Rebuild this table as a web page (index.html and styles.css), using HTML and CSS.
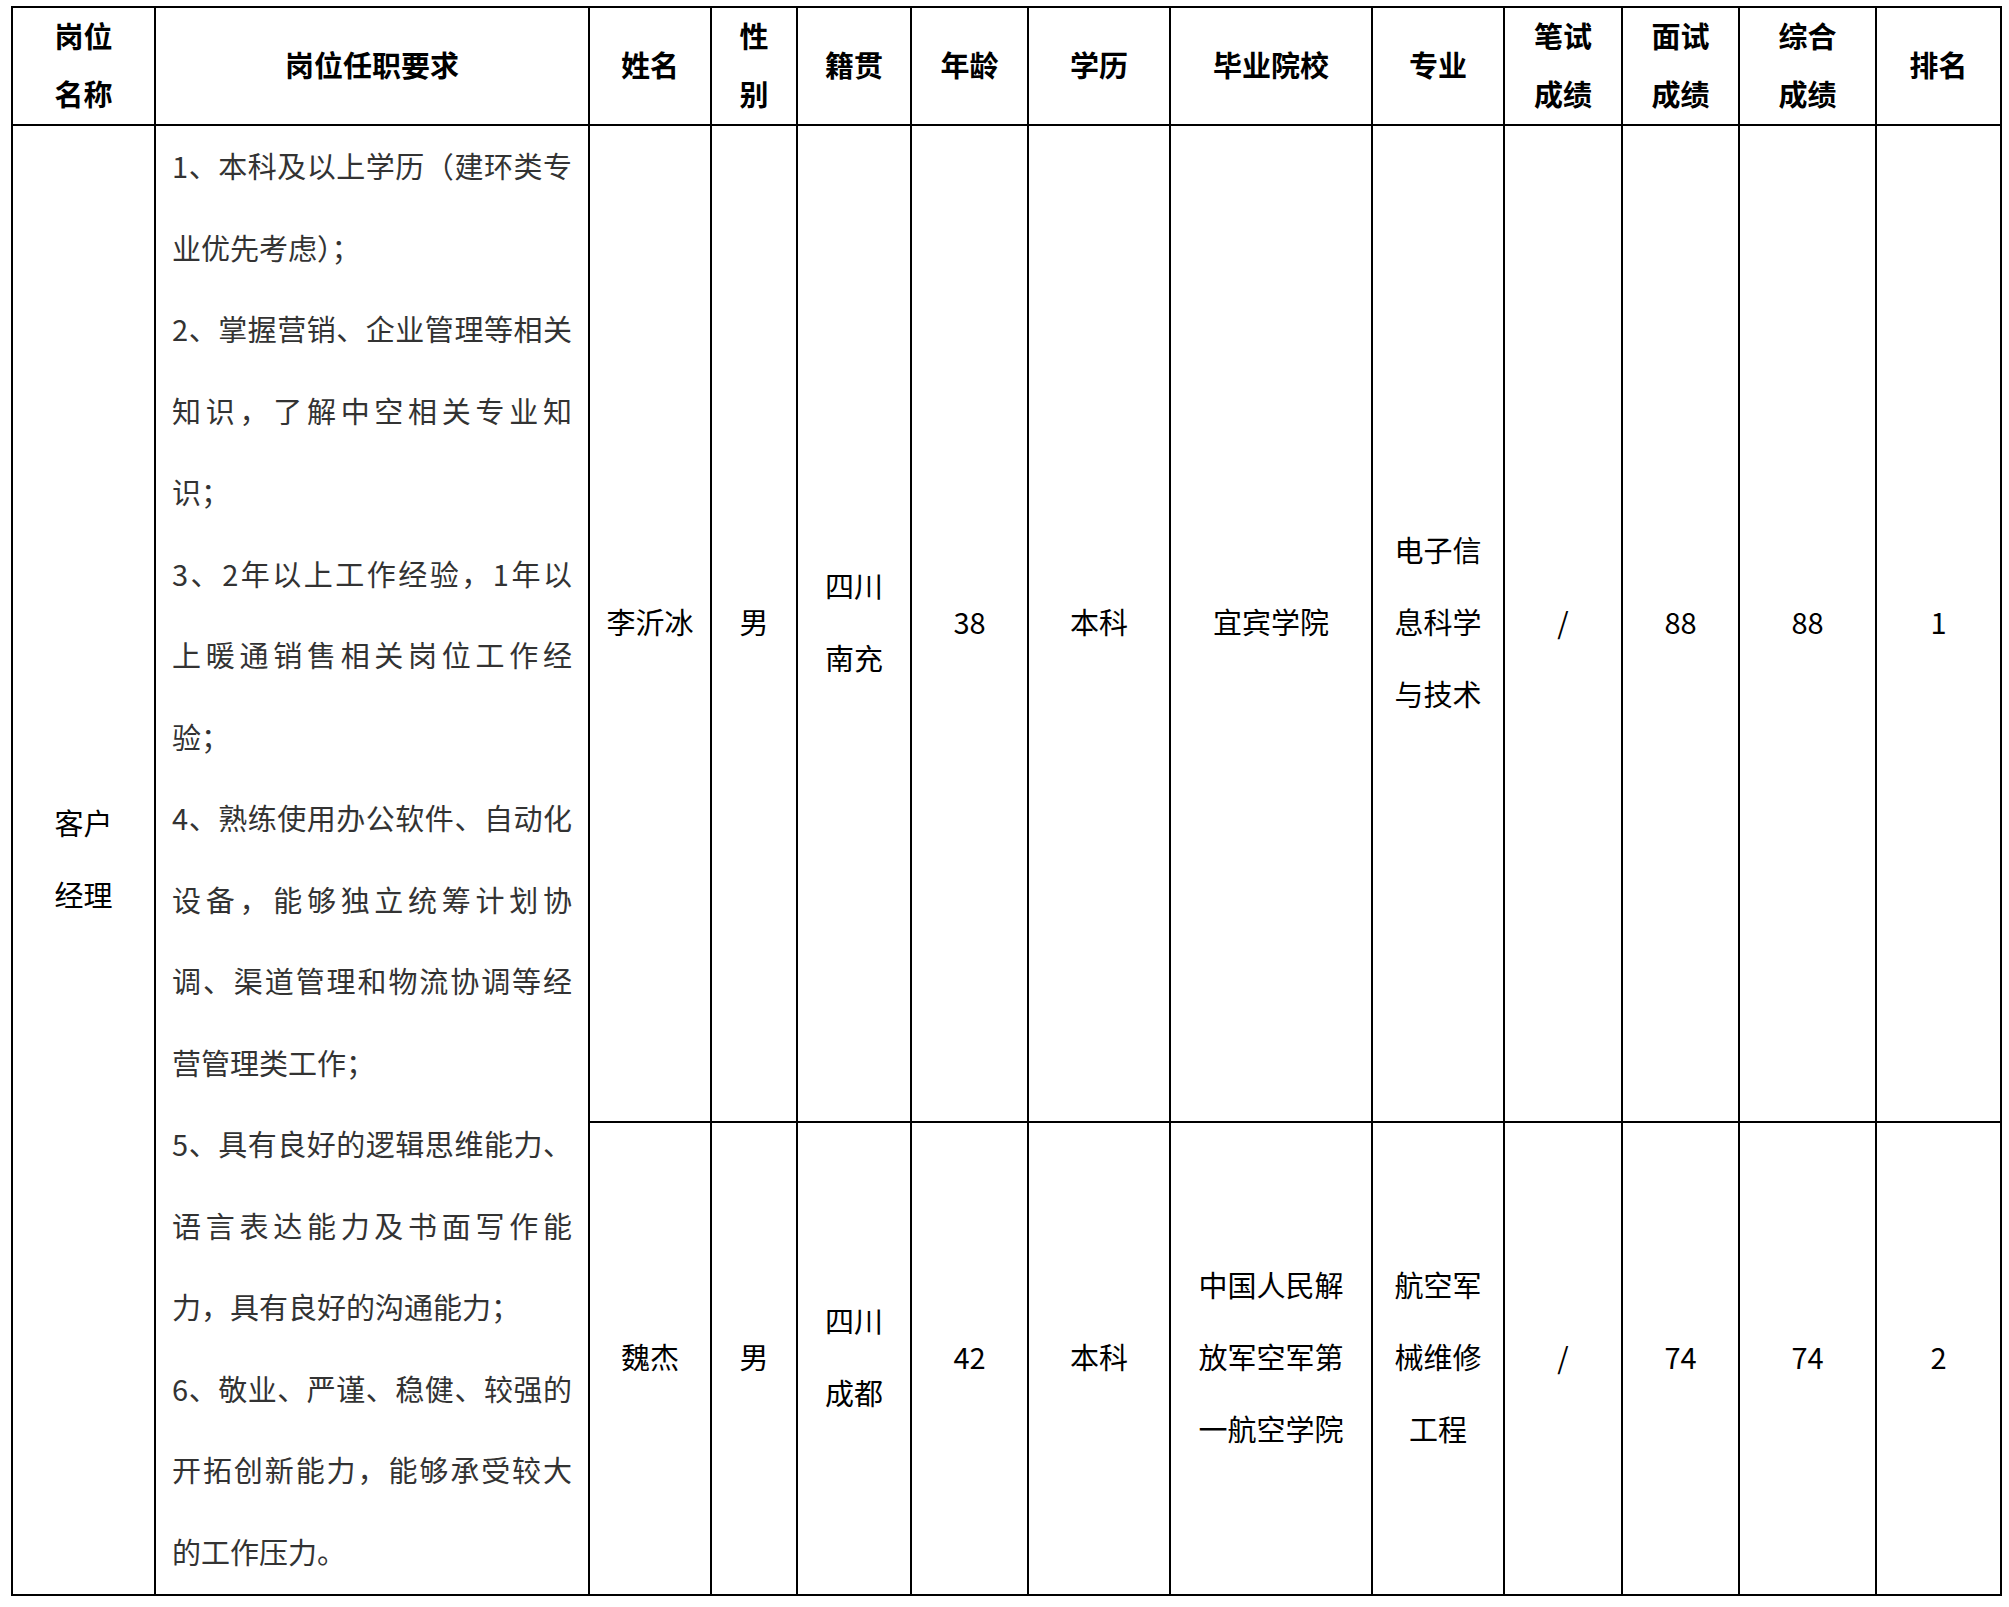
FILE: index.html
```html
<!DOCTYPE html>
<html lang="zh-CN">
<head>
<meta charset="utf-8">
<title>岗位成绩表</title>
<link rel="stylesheet" href="styles.css">
</head>
<body>
<div class="sheet">
  <div class="cell th">岗位<br>名称</div>
  <div class="cell th">岗位任职要求</div>
  <div class="cell th">姓名</div>
  <div class="cell th">性<br>别</div>
  <div class="cell th">籍贯</div>
  <div class="cell th">年龄</div>
  <div class="cell th">学历</div>
  <div class="cell th">毕业院校</div>
  <div class="cell th">专业</div>
  <div class="cell th">笔试<br>成绩</div>
  <div class="cell th">面试<br>成绩</div>
  <div class="cell th">综合<br>成绩</div>
  <div class="cell th">排名</div>

  <div class="cell td span2">客户<br>经理</div>
  <div class="cell req span2">
    <div class="ln j">1、本科及以上学历（建环类专</div>
    <div class="ln">业优先考虑）；</div>
    <div class="ln j">2、掌握营销、企业管理等相关</div>
    <div class="ln j">知识，了解中空相关专业知</div>
    <div class="ln">识；</div>
    <div class="ln j">3、2年以上工作经验，1年以</div>
    <div class="ln j">上暖通销售相关岗位工作经</div>
    <div class="ln">验；</div>
    <div class="ln j">4、熟练使用办公软件、自动化</div>
    <div class="ln j">设备，能够独立统筹计划协</div>
    <div class="ln j">调、渠道管理和物流协调等经</div>
    <div class="ln">营管理类工作；</div>
    <div class="ln j">5、具有良好的逻辑思维能力、</div>
    <div class="ln j">语言表达能力及书面写作能</div>
    <div class="ln">力，具有良好的沟通能力；</div>
    <div class="ln j">6、敬业、严谨、稳健、较强的</div>
    <div class="ln j">开拓创新能力，能够承受较大</div>
    <div class="ln">的工作压力。</div>
  </div>

  <div class="cell td">李沂冰</div>
  <div class="cell td">男</div>
  <div class="cell td">四川<br>南充</div>
  <div class="cell td">38</div>
  <div class="cell td">本科</div>
  <div class="cell td">宜宾学院</div>
  <div class="cell td">电子信<br>息科学<br>与技术</div>
  <div class="cell td">/</div>
  <div class="cell td">88</div>
  <div class="cell td">88</div>
  <div class="cell td">1</div>

  <div class="cell td">魏杰</div>
  <div class="cell td">男</div>
  <div class="cell td">四川<br>成都</div>
  <div class="cell td">42</div>
  <div class="cell td">本科</div>
  <div class="cell td">中国人民解<br>放军空军第<br>一航空学院</div>
  <div class="cell td">航空军<br>械维修<br>工程</div>
  <div class="cell td">/</div>
  <div class="cell td">74</div>
  <div class="cell td">74</div>
  <div class="cell td">2</div>
</div>
</body>
</html>
```

FILE: styles.css
```css
html, body {
  margin: 0;
  padding: 0;
  background: #ffffff;
}

body {
  font-family: "Noto Sans CJK SC", "Noto Sans", sans-serif;
  font-size: 29px;
  color: #000000;
}

.sheet {
  display: grid;
  grid-template-columns: 141px 432px 120px 84px 112px 115px 140px 200px 130px 116px 115px 135px 123px;
  grid-template-rows: 116px 995px 471px;
  gap: 2px;
  padding: 2px;
  background: #000000;
  width: max-content;
  margin: 6px 0 0 11px;
}

.cell {
  background: #ffffff;
  display: flex;
  align-items: center;
  justify-content: center;
  text-align: center;
  padding-bottom: 5px;
}

.th {
  font-weight: 700;
  line-height: 58px;
}

.td {
  line-height: 72px;
}

.span2 {
  grid-row: span 2;
}

.req {
  flex-direction: column;
  align-items: stretch;
  justify-content: center;
  padding: 0 16px 3px;
  color: #333333;
  line-height: 81.5px;
  text-align: left;
}

.ln {
  white-space: nowrap;
}

.ln.j {
  text-align: justify;
  text-align-last: justify;
}
```
